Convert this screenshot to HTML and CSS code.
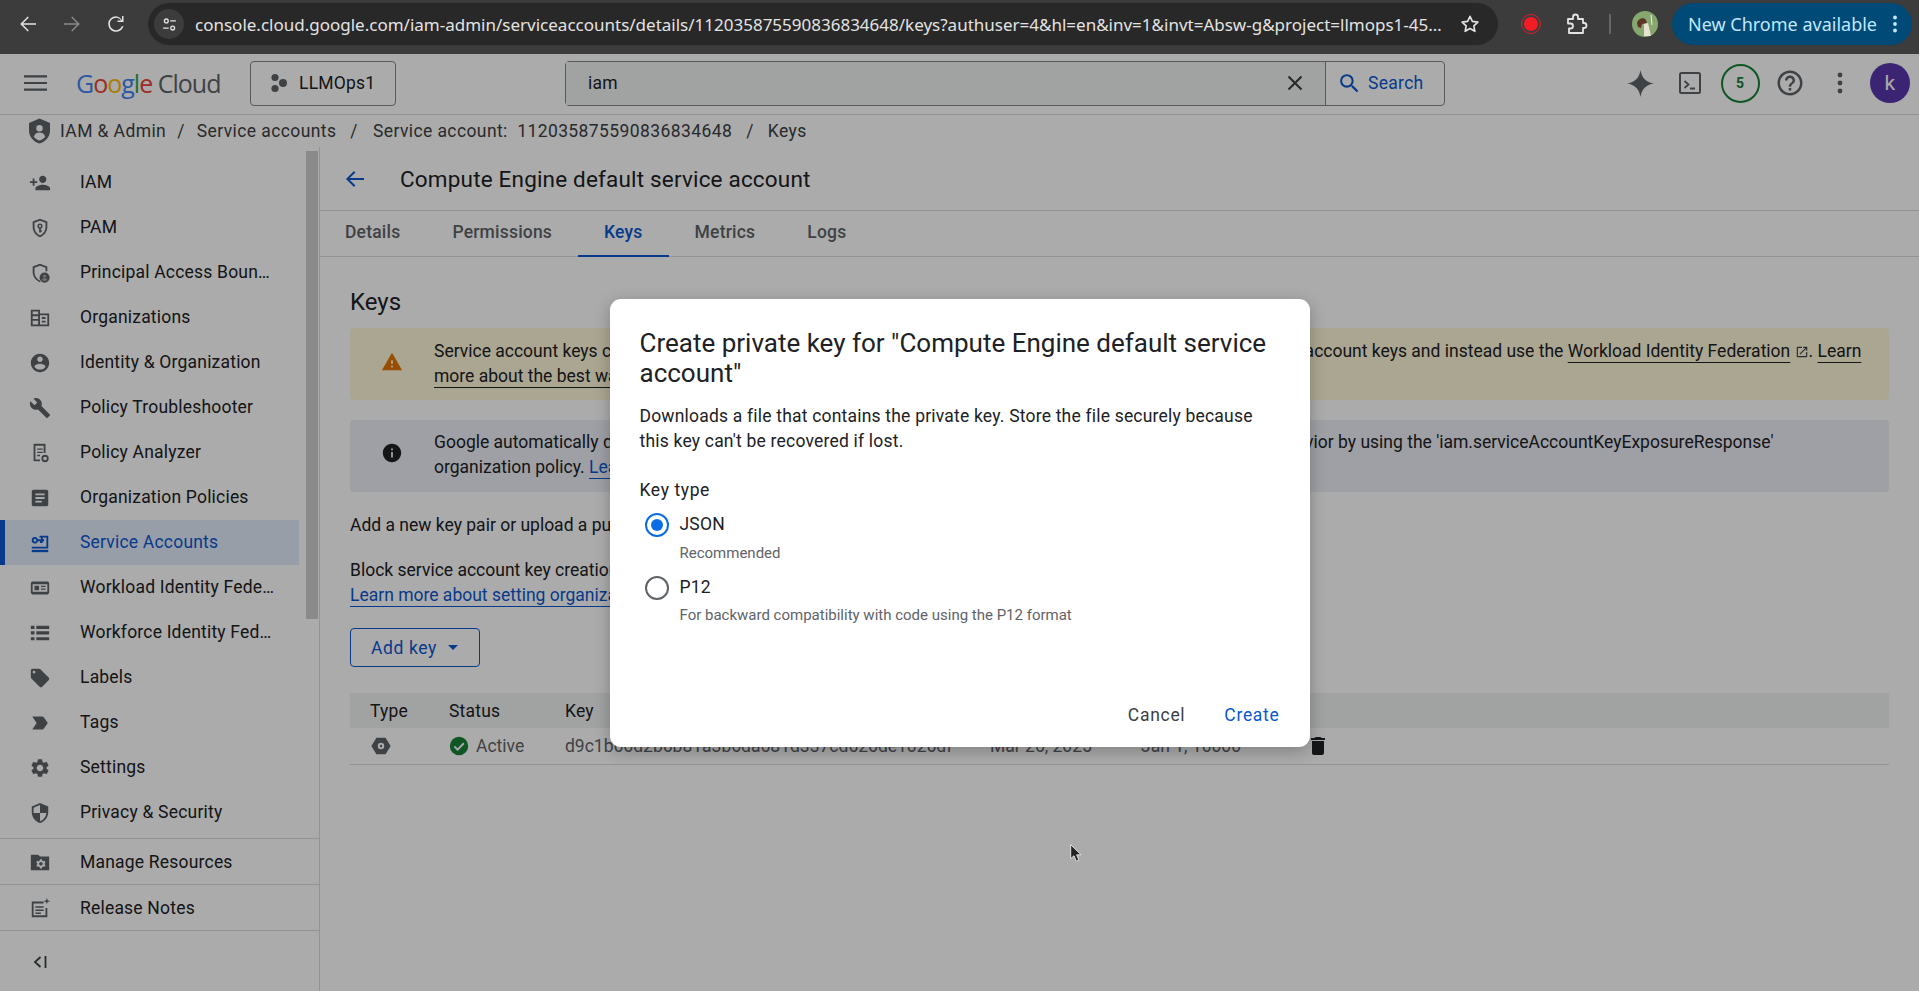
FILE: index.html
```html
<!DOCTYPE html>
<html>
<head>
  <title>Compute Engine default service account - Keys</title>
  <link rel="stylesheet" href="styles.css">
</head>
<body>
  <!-- browser toolbar -->
  <div class="browser-bar">
    <svg class="nav-icon first" viewBox="0 0 24 24"><path d="M20 11.200H7l5.800-5.800-1-1L4.200 12l7.600 7.600 1-1L7 12.800h13z"/></svg>
    <svg class="nav-icon off" viewBox="0 0 24 24"><path d="M4 11.200h13l-5.800-5.800 1-1 7.600 7.600-7.600 7.600-1-1 5.800-5.800H4z"/></svg>
    <svg class="nav-icon" viewBox="0 0 24 24"><path d="M18 4v4.300h-.1A7.900 7.900 0 0 0 12 4.200a7.800 7.800 0 1 0 7.500 10h-1.700A6.200 6.200 0 1 1 12 5.800c2.100 0 3.900 1 5 2.700h-3.500V10H19.500V4z"/></svg>
    <div class="url-pill">
      <span class="site-info">
        <svg viewBox="0 0 24 24" fill="none" stroke="#e3e3e3" stroke-width="1.7"><circle cx="8" cy="7.500" r="2.400"/><path d="M13 7.500h7M4 16.500h7"/><circle cx="16" cy="16.500" r="2.400"/></svg>
      </span>
      <span class="url-text">console.cloud.google.com/iam-admin/serviceaccounts/details/112035875590836834648/keys?authuser=4&amp;hl=en&amp;inv=1&amp;invt=Absw-g&amp;project=llmops1-45…</span>
      <svg class="star" viewBox="0 0 24 24" fill="none" stroke="#e3e3e3" stroke-width="1.8" stroke-linejoin="round"><path d="M12 3.600l2.600 5.500 6 .8-4.400 4.100 1.100 6L12 17l-5.300 3 1.100-6-4.400-4.100 6-.8z"/></svg>
    </div>
    <span class="record"><span class="record-dot"></span></span>
    <svg class="puzzle" viewBox="0 0 24 24" fill="none" stroke="#e3e3e3" stroke-width="1.8" stroke-linejoin="round"><path d="M4 7h5V5a2.500 2.500 0 0 1 5 0v2h5v4h1a2.500 2.500 0 0 1 0 5h-1v5H5v-4.500h1.500a2.500 2.500 0 0 0 0-5H4z"/></svg>
    <span class="bar-sep"></span>
    <svg class="profile" viewBox="0 0 26 26"><circle cx="13" cy="13" r="13" fill="#86a86f"/><path d="M5 12c1-5 7-6 9-3l1 3-5 1-1 4-3-1z" fill="#5b3427"/><path d="M12 13l4-1 3 13h-7z" fill="#e8e2d4"/><path d="M19 4l1 10" stroke="#eee" stroke-width="1"/></svg>
    <div class="update-pill">
      <span>New Chrome available</span>
      <svg viewBox="0 0 6 20" width="6" height="20" fill="#c2e7ff"><circle cx="3" cy="3.500" r="1.900"/><circle cx="3" cy="10" r="1.900"/><circle cx="3" cy="16.500" r="1.900"/></svg>
    </div>
  </div>

  <div class="page">
    <header class="cloud-bar">
      <svg class="hamburger" viewBox="0 0 24 16"><path d="M0 0h24v2.200H0zM0 6.900h24v2.200H0zM0 13.800h24V16H0z" fill="#5f6368"/></svg>
      <div class="logo"><span class="lg-b">G</span><span class="lg-r">o</span><span class="lg-y">o</span><span class="lg-b">g</span><span class="lg-g">l</span><span class="lg-r">e</span> <span class="lg-c">Cloud</span></div>
      <button class="project-btn">
        <svg viewBox="0 0 18 20" width="18" height="20" fill="#5f6368"><circle cx="5" cy="4.500" r="3.600"/><circle cx="5" cy="15.500" r="3.600"/><circle cx="13" cy="10" r="4"/></svg>
        LLMOps1
      </button>
      <div class="search-box">
        <div class="search-input">
          <span class="search-term">iam</span>
          <svg viewBox="0 0 24 24" width="24" height="24"><path d="M5.500 5.500l13 13M18.500 5.500l-13 13" stroke="#3c4043" stroke-width="2.200"/></svg>
        </div>
        <div class="search-go">
          <svg viewBox="0 0 24 24" width="25" height="25" fill="#0b57d0"><path d="M15.500 14h-.79l-.28-.27A6.470 6.470 0 0 0 16 9.500 6.500 6.500 0 1 0 9.500 16c1.610 0 3.090-.59 4.230-1.570l.27.28v.79l5 4.990L20.490 19l-4.990-5zm-6 0C7.010 14 5 11.990 5 9.500S7.010 5 9.500 5 14 7.010 14 9.500 11.990 14 9.500 14z"/></svg>
          <span>Search</span>
        </div>
      </div>
      <div class="bar-actions">
        <span class="bar-action"><svg viewBox="0 0 24 24" width="27" height="27" fill="#5f6368"><path d="M12 0c1 7 5 11 12 12-7 1-11 5-12 12-1-7-5-11-12-12 7-1 11-5 12-12z"/></svg></span>
        <span class="bar-action"><svg viewBox="0 0 24 24" width="24" height="26" fill="none" stroke="#5f6368" stroke-width="2"><rect x="2" y="2" width="20" height="20" rx="1.500"/><path d="M6.500 10l4 3.500-4 3.500" stroke-width="1.800"/><path d="M12 17.500h5" stroke-width="2"/></svg></span>
        <span class="bar-action"><span class="count-ring">5</span></span>
        <span class="bar-action"><svg viewBox="0 0 24 24" width="30" height="30" fill="#5f6368"><path d="M11 18h2v-2h-2v2zm1-16C6.480 2 2 6.480 2 12s4.480 10 10 10 10-4.480 10-10S17.520 2 12 2zm0 18c-4.410 0-8-3.590-8-8s3.590-8 8-8 8 3.590 8 8-3.590 8-8 8zm0-14c-2.210 0-4 1.790-4 4h2c0-1.100.9-2 2-2s2 .9 2 2c0 2-3 1.750-3 5h2c0-2.250 3-2.500 3-5 0-2.210-1.790-4-4-4z"/></svg></span>
        <span class="bar-action"><svg viewBox="0 0 6 24" width="6" height="24" fill="#5f6368"><circle cx="3" cy="4" r="2.400"/><circle cx="3" cy="12" r="2.400"/><circle cx="3" cy="20" r="2.400"/></svg></span>
        <span class="bar-action"><span class="user-chip">k</span></span>
      </div>
    </header>

    <nav class="crumbs">
      <svg class="crumb-icon" viewBox="0 0 22 26"><path d="M11 0L0 4.500v8C0 19 4.700 24.500 11 26c6.300-1.500 11-7 11-13.500v-8z" fill="#5f6368"/><circle cx="11" cy="10" r="3.400" fill="#fff"/><path d="M5 19c.6-3 3.400-4.500 6-4.500s5.400 1.500 6 4.500c-1.500 2-3.500 3.300-6 4-2.500-.7-4.500-2-6-4z" fill="#fff"/></svg>
      <span>IAM &amp; Admin</span><i>/</i>
      <span>Service accounts</span><i>/</i>
      <span>Service account: &nbsp;112035875590836834648</span><i>/</i>
      <span>Keys</span>
    </nav>

    <div class="workspace">
      <aside class="sidebar">
        <div class="side-scroll">
          <a class="side-item"><svg viewBox="0 0 24 24"><path d="M15 12c2.210 0 4-1.790 4-4s-1.790-4-4-4-4 1.790-4 4 1.790 4 4 4zm-9-2V7H4v3H1v2h3v3h2v-3h3v-2H6zm9 4c-2.670 0-8 1.340-8 4v2h16v-2c0-2.660-5.330-4-8-4z"/></svg>IAM</a>
          <a class="side-item"><svg viewBox="0 0 24 24"><path fill-rule="evenodd" d="M12 2L4 5v6c0 5 3.400 9.600 8 11 4.600-1.400 8-6 8-11V5zm0 2.100l6 2.300V11c0 4-2.600 7.800-6 9-3.400-1.200-6-5-6-9V6.400z"/><path fill-rule="evenodd" d="M12 7a3 3 0 0 0-1 5.800V17h2v-1h1v-1.500h-1v-1.700A3 3 0 0 0 12 7zm0 1.800a1.200 1.200 0 1 1 0 2.400 1.200 1.200 0 0 1 0-2.400z"/></svg>PAM</a>
          <a class="side-item"><svg viewBox="0 0 24 24"><path d="M12 2L4 5v6c0 5 3.400 9.600 8 11l.6-.2-1-1.800C8.400 18.600 6 15 6 11V6.400l6-2.300 6 2.300V10h2V5z"/><circle cx="17" cy="17" r="5.500"/><circle cx="17" cy="15.500" r="1.600" fill="#ababab"/><path d="M14 19.500c.5-1.200 1.700-1.700 3-1.700s2.500.5 3 1.700c-1.600 1.300-4.400 1.300-6 0z" fill="#ababab"/></svg>Principal Access Boun…</a>
          <a class="side-item"><svg viewBox="0 0 24 24"><path fill-rule="evenodd" d="M2 3h10v4h10v14H2zm2 2v3h6V5zm0 5v3h6v-3zm0 5v4h6v-4zm8-6v10h8V9zm2 2h4v2h-4zm0 4h4v2h-4z"/></svg>Organizations</a>
          <a class="side-item"><svg viewBox="0 0 24 24"><path d="M12 2C6.480 2 2 6.480 2 12s4.480 10 10 10 10-4.480 10-10S17.520 2 12 2zm0 3c1.660 0 3 1.340 3 3s-1.340 3-3 3-3-1.340-3-3 1.340-3 3-3zm0 14.200c-2.500 0-4.710-1.280-6-3.220.030-1.990 4-3.080 6-3.080 1.990 0 5.970 1.090 6 3.080-1.290 1.940-3.500 3.220-6 3.220z"/></svg>Identity &amp; Organization</a>
          <a class="side-item"><svg viewBox="0 0 24 24"><path d="M22.700 19l-9.100-9.100c.9-2.300.4-5-1.500-6.900-2-2-5-2.400-7.400-1.300L9 6 6 9 1.600 4.700C.4 7.100.9 10.100 2.900 12.100c1.900 1.900 4.600 2.400 6.900 1.500l9.100 9.100c.4.4 1 .4 1.400 0l2.300-2.300c.5-.4.5-1.100.1-1.400z"/></svg>Policy Troubleshooter</a>
          <a class="side-item"><svg viewBox="0 0 24 24"><path fill-rule="evenodd" d="M5 2h13v10h-2V4H7v15h5v2H5z"/><path d="M9 7h6v1.500H9zM9 10.500h6V12H9zM9 14h3v1.500H9z"/><path fill-rule="evenodd" d="M17.500 14a4 4 0 1 0 0 8 4 4 0 0 0 0-8zm0 2a2 2 0 1 1 0 4 2 2 0 0 1 0-4z"/></svg>Policy Analyzer</a>
          <a class="side-item"><svg viewBox="0 0 24 24"><path d="M19 3H5c-1.100 0-2 .9-2 2v14c0 1.100.9 2 2 2h14c1.100 0 2-.9 2-2V5c0-1.100-.9-2-2-2zM7 7h10v2H7zm0 4h10v2H7zm0 4h7v2H7z" fill-rule="evenodd"/></svg>Organization Policies</a>
          <a class="side-item active"><svg viewBox="0 0 24 24"><path fill-rule="evenodd" d="M6.500 5.500a3.500 3.500 0 0 1 3.300 2.300H13V6h-1.500V4H21v14H3v-2h16V6h-4v1.800h1.500V10H15v2h-3v-2H9.800a3.500 3.500 0 1 1-3.300-4.500zm0 2a1.500 1.500 0 1 0 0 3 1.500 1.500 0 0 0 0-3z"/><path d="M3 19.500h18V22H3z"/></svg>Service Accounts</a>
          <a class="side-item"><svg viewBox="0 0 24 24"><path fill-rule="evenodd" d="M4 5h16a2 2 0 0 1 2 2v10a2 2 0 0 1-2 2H4a2 2 0 0 1-2-2V7a2 2 0 0 1 2-2zm0 3v8h16V8zm2 1.500h5v5H6zm7 0h5V11h-5zm0 3h5v1.500h-5z"/></svg>Workload Identity Fede…</a>
          <a class="side-item"><svg viewBox="0 0 24 24"><path d="M2 4h4v3.500H2zM8 4h14v3.500H8zM2 10.200h4v3.500H2zM8 10.200h14v3.500H8zM2 16.500h4V20H2zM8 16.500h14V20H8z"/></svg>Workforce Identity Fed…</a>
          <a class="side-item"><svg viewBox="0 0 24 24"><path d="M21.410 11.580l-9-9C12.050 2.220 11.550 2 11 2H4c-1.100 0-2 .9-2 2v7c0 .55.22 1.050.59 1.420l9 9c.36.36.86.58 1.410.58.55 0 1.050-.22 1.410-.59l7-7c.37-.36.59-.86.59-1.410 0-.55-.23-1.060-.59-1.420zM5.500 7C4.670 7 4 6.330 4 5.500S4.670 4 5.500 4 7 4.670 7 5.500 6.330 7 5.500 7z"/></svg>Labels</a>
          <a class="side-item"><svg viewBox="0 0 24 24"><path d="M3.500 18.990l11 .01c.67 0 1.270-.33 1.630-.84L20.500 12l-4.370-6.160c-.36-.51-.96-.84-1.630-.84l-11 .01L8.340 12 3.500 18.990z"/></svg>Tags</a>
          <a class="side-item"><svg viewBox="0 0 24 24"><path d="M19.140 12.940c.04-.3.06-.61.06-.94 0-.32-.02-.64-.07-.94l2.030-1.580c.18-.14.23-.41.12-.61l-1.920-3.320c-.12-.22-.37-.29-.59-.22l-2.390.96c-.5-.38-1.030-.7-1.620-.94l-.36-2.540c-.04-.24-.24-.41-.48-.41h-3.840c-.24 0-.43.17-.47.41l-.36 2.540c-.59.24-1.130.57-1.620.94l-2.390-.96c-.22-.08-.47 0-.59.22L2.740 8.870c-.12.21-.08.47.12.61l2.030 1.580c-.05.3-.09.63-.09.94s.02.64.07.94l-2.030 1.580c-.18.14-.23.41-.12.61l1.920 3.320c.12.22.37.29.59.22l2.390-.96c.5.38 1.030.7 1.620.94l.36 2.540c.05.24.24.41.48.41h3.840c.24 0 .44-.17.47-.41l.36-2.540c.59-.24 1.130-.56 1.620-.94l2.390.96c.22.08.47 0 .59-.22l1.920-3.320c.12-.22.07-.47-.12-.61l-2.010-1.580zM12 15.600c-1.980 0-3.600-1.620-3.600-3.600s1.620-3.600 3.600-3.600 3.600 1.620 3.600 3.600-1.620 3.600-3.600 3.600z"/></svg>Settings</a>
          <a class="side-item"><svg viewBox="0 0 24 24"><path d="M12 1L3 5v6c0 5.550 3.840 10.740 9 12 5.160-1.260 9-6.450 9-12V5l-9-4zm0 10.990h7c-.53 4.120-3.280 7.790-7 8.940V12H5V6.300l7-3.110v8.800z"/></svg>Privacy &amp; Security</a>
        </div>
        <a class="side-item boxed"><svg viewBox="0 0 24 24"><path fill-rule="evenodd" d="M2 4h8l2 2h10v15H2zm10 5l-.4 1.500-1.200.7-1.400-.5-1 1.800 1.100 1c0 .4 0 .7 0 1l-1.100 1 1 1.800 1.400-.5 1.200.7.400 1.500h2l.4-1.500 1.200-.7 1.400.5 1-1.800-1.100-1c.1-.3.1-.6 0-1l1.100-1-1-1.800-1.400.5-1.200-.7L14 9zm1 3a2 2 0 1 1 0 4 2 2 0 0 1 0-4z"/></svg>Manage Resources</a>
        <a class="side-item boxed"><svg viewBox="0 0 24 24"><path fill-rule="evenodd" d="M3 5h13v2H5v13h13v-8h2v10H3z"/><path d="M7 10h9v1.800H7zM7 13.500h9v1.800H7zM7 17h6v1.500H7zM19.500 1l.9 2.600L23 4.500l-2.600.9-.9 2.600-.9-2.600-2.600-.9 2.600-.9z"/></svg>Release Notes</a>
        <div class="collapse-row">
          <svg viewBox="0 0 14 16" width="14" height="16" fill="none" stroke="#3c4043" stroke-width="1.800"><path d="M7.500 3L2 8l5.500 5M12.500 2v12"/></svg>
        </div>
        <div class="side-thumb"></div>
      </aside>

      <main class="content">
        <div class="title-row">
          <svg viewBox="0 0 24 24" width="24" height="24" fill="#0b57d0"><path d="M21 11H6.800l5.600-5.600L11 4l-8 8 8 8 1.400-1.400L6.800 13H21z"/></svg>
          <h1>Compute Engine default service account</h1>
        </div>
        <div class="tabs">
          <a class="tab">Details</a>
          <a class="tab">Permissions</a>
          <a class="tab current">Keys</a>
          <a class="tab">Metrics</a>
          <a class="tab">Logs</a>
        </div>
        <section class="keys-pane">
          <h2>Keys</h2>
          <div class="notice warn">
            <svg viewBox="0 0 24 24" width="22" height="22" fill="#e37400"><path d="M1 21h22L12 2 1 21zm12-3h-2v-2h2v2zm0-4h-2v-4h2v4z"/></svg>
            <p>Service account keys could pose a security risk if compromised. We recommend you avoid downloading service account keys and instead use the <a class="ink">Workload Identity Federation</a> <svg class="ext" viewBox="0 0 24 24" width="14" height="14" fill="#3c4043"><path d="M19 19H5V5h7V3H5a2 2 0 0 0-2 2v14a2 2 0 0 0 2 2h14a2 2 0 0 0 2-2v-7h-2v7zM14 3v2h3.590l-9.830 9.830 1.410 1.410L19 6.410V10h2V3h-7z"/></svg>. <a class="ink">Learn more about the best way to authenticate service accounts on Google Cloud here</a>.</p>
          </div>
          <div class="notice info">
            <svg viewBox="0 0 24 24" width="22" height="22" fill="#202124"><path d="M12 2C6.480 2 2 6.480 2 12s4.480 10 10 10 10-4.480 10-10S17.520 2 12 2zm1 15h-2v-6h2v6zm0-8h-2V7h2v2z"/></svg>
            <p>Google automatically disables service account keys detected in public repositories. You can customize this behavior by using the 'iam.serviceAccountKeyExposureResponse' organization policy. <a class="blue">Learn more</a></p>
          </div>
          <p class="para">Add a new key pair or upload a public key certificate from an existing key pair.</p>
          <p class="para">Block service account key creation using organization policies.<br><a class="blue">Learn more about setting organization policies for service accounts</a></p>
          <button class="add-key">Add key <svg viewBox="0 0 10 5" width="10" height="5" fill="#0b57d0"><path d="M0 0h10L5 5z"/></svg></button>
          <table class="key-table">
            <tr>
              <th class="c-type">Type</th>
              <th class="c-status">Status</th>
              <th class="c-key">Key</th>
              <th class="c-made">Key creation date</th>
              <th class="c-exp">Key expiry date</th>
              <th></th>
            </tr>
            <tr>
              <td><svg viewBox="0 0 24 24" width="22" height="22" fill="#5f6368"><path fill-rule="evenodd" d="M7 3h10l5.500 9L17 21H7L1.500 12zm5 5.500a3.500 3.500 0 1 0 0 7 3.500 3.500 0 0 0 0-7zm0 2.200a1.300 1.300 0 1 1 0 2.600 1.300 1.300 0 0 1 0-2.600z"/></svg></td>
              <td><span class="status-cell"><svg viewBox="0 0 24 24" width="20" height="20"><circle cx="12" cy="12" r="11" fill="#188038"/><path d="M6.500 12.500l3.800 3.800 7.500-7.600" fill="none" stroke="#fff" stroke-width="2.200"/></svg>Active</span></td>
              <td>d9c1b66d2b6b81a3b6da681d337cd626de1026df</td>
              <td>Mar 26, 2025</td>
              <td>Jan 1, 10000</td>
              <td><svg viewBox="0 0 24 24" width="24" height="24" fill="#202124"><path d="M6 19c0 1.100.9 2 2 2h8c1.100 0 2-.9 2-2V7H6v12zM19 4h-3.500l-1-1h-5l-1 1H5v2h14V4z"/></svg></td>
            </tr>
          </table>
        </section>
      </main>
    </div>

    <!-- modal -->
    <div class="scrim">
      <div class="dialog">
        <h3>Create private key for "Compute Engine default service account"</h3>
        <p class="dialog-copy">Downloads a file that contains the private key. Store the file securely because this key can't be recovered if lost.</p>
        <div class="field-label">Key type</div>
        <div class="radio-row">
          <span class="radio on"></span>
          <div>
            <div class="radio-name">JSON</div>
            <div class="radio-hint">Recommended</div>
          </div>
        </div>
        <div class="radio-row">
          <span class="radio"></span>
          <div>
            <div class="radio-name">P12</div>
            <div class="radio-hint">For backward compatibility with code using the P12 format</div>
          </div>
        </div>
        <div class="dialog-actions">
          <a class="act-cancel">Cancel</a>
          <a class="act-create">Create</a>
        </div>
      </div>
      <svg class="cursor" viewBox="0 0 12 18" width="12" height="18"><path d="M.7.7v14l3.300-3 2.300 5.500 2.600-1.100-2.300-5.300h4.500z" fill="#222" stroke="#eee" stroke-width=".9"/></svg>
    </div>
  </div>
</body>
</html>
```

FILE: styles.css
```css
* {
  box-sizing: border-box;
}

html, body {
  height: 100%;
}

body {
  margin: 0;
  height: 991px;
  overflow: hidden;
  font-family: Roboto, "Liberation Sans", sans-serif;
  font-size: 17.5px;
  letter-spacing: 0.2px;
  color: #202124;
  background: #fff;
}

/* browser toolbar */
.browser-bar {
  height: 54px;
  display: flex;
  align-items: center;
  background: #3c3c3c;
  letter-spacing: 0;
}

.nav-icon {
  width: 24px;
  height: 24px;
  margin-left: 20px;
  margin-bottom: 6px;
  fill: #e3e3e3;
}

.nav-icon.first {
  margin-left: 16px;
}

.nav-icon.off {
  fill: #8a8a8a;
}

.url-pill {
  width: 1350px;
  height: 42px;
  margin: 0 0 6px 20px;
  display: flex;
  align-items: center;
  background: #282828;
  border-radius: 21px;
  padding-left: 6px;
}

.site-info {
  width: 30px;
  height: 30px;
  border-radius: 50%;
  background: #3c3c3c;
  display: flex;
  align-items: center;
  justify-content: center;
}

.site-info svg {
  width: 19px;
  height: 19px;
}

.url-text {
  width: 1250px;
  margin-left: 11px;
  font-family: "Noto Sans", sans-serif;
  font-size: 17px;
  color: #e3e3e3;
  white-space: nowrap;
  overflow: hidden;
}

.star {
  width: 22px;
  height: 22px;
  margin-left: 14px;
}

.record {
  width: 20px;
  height: 20px;
  margin: 0 0 6px 23px;
  border-radius: 50%;
  border: 1.5px solid #d8222a;
  display: flex;
  align-items: center;
  justify-content: center;
}

.record-dot {
  width: 14px;
  height: 14px;
  border-radius: 50%;
  background: #f41c24;
}

.puzzle {
  width: 24px;
  height: 24px;
  margin: 0 0 6px 23px;
}

.bar-sep {
  width: 2px;
  height: 20px;
  margin: 0 0 6px 21px;
  background: #666;
}

.profile {
  width: 26px;
  height: 26px;
  margin: 0 0 6px 21px;
}

.update-pill {
  width: 240px;
  height: 42px;
  margin: 0 0 6px 14px;
  padding: 0 14px 0 16px;
  display: flex;
  align-items: center;
  justify-content: space-between;
  background: #004a77;
  border-radius: 21px;
  font-family: "Noto Sans", sans-serif;
  font-size: 18px;
  color: #c2e7ff;
  white-space: nowrap;
}

/* page below the browser chrome */
.page {
  position: relative;
  height: 937px;
  display: flex;
  flex-direction: column;
}

.cloud-bar {
  height: 61px;
  flex: none;
  display: flex;
  align-items: center;
  border-bottom: 1px solid #dadce0;
  padding-bottom: 2px;
}

.hamburger {
  width: 23px;
  height: 16px;
  margin-left: 24px;
}

.logo {
  width: 145px;
  margin-left: 29px;
  font-family: "Open Sans", sans-serif;
  font-size: 25px;
  letter-spacing: -1px;
  white-space: nowrap;
}

.lg-b { color: #4285f4; }
.lg-r { color: #ea4335; }
.lg-y { color: #fbbc04; }
.lg-g { color: #34a853; }
.lg-c { color: #5f6368; }

.project-btn {
  width: 146px;
  height: 45px;
  margin-left: 29px;
  padding: 0 0 0 19px;
  display: flex;
  align-items: center;
  gap: 11px;
  background: transparent;
  border: 1px solid #80868b;
  border-radius: 4px;
  font-family: Roboto, sans-serif;
  font-size: 17.5px;
  letter-spacing: 0.2px;
  color: #202124;
}

.search-box {
  width: 880px;
  height: 45px;
  margin-left: 169px;
  display: flex;
  border: 1px solid #80868b;
  border-radius: 4px;
}

.search-input {
  width: 760px;
  display: flex;
  align-items: center;
  justify-content: space-between;
  padding: 0 18px 0 22px;
  background: #f1f3f4;
  border-right: 1px solid #80868b;
}

.search-go {
  flex: 1;
  display: flex;
  align-items: center;
  gap: 6px;
  padding-left: 11px;
  font-weight: 450;
  letter-spacing: 0.3px;
  color: #0b57d0;
}

.bar-actions {
  display: flex;
  margin-left: auto;
  padding-right: 4px;
}

.bar-action {
  width: 50px;
  height: 45px;
  display: flex;
  align-items: center;
  justify-content: center;
}

.count-ring {
  width: 39px;
  height: 39px;
  display: flex;
  align-items: center;
  justify-content: center;
  border: 2px solid #188038;
  border-radius: 50%;
  font-size: 14px;
  font-weight: 700;
  color: #188038;
}

.user-chip {
  width: 40px;
  height: 40px;
  display: flex;
  align-items: center;
  justify-content: center;
  border-radius: 50%;
  background: #5937ad;
  color: #fff;
  font-size: 21px;
}

.crumbs {
  height: 32px;
  flex: none;
  display: flex;
  align-items: center;
  padding: 0 0 0 29px;
  letter-spacing: 0.4px;
  color: #3c4043;
}

.crumb-icon {
  width: 21px;
  height: 26px;
  margin-right: 10px;
}

.crumbs i {
  font-style: normal;
  margin: 0 14px;
}

.crumbs i:first-of-type {
  margin: 0 12px 0 11px;
}

.crumbs i:nth-of-type(2) {
  margin-right: 15px;
}

.workspace {
  flex: 1;
  display: flex;
  min-height: 0;
}

/* left navigation */
.sidebar {
  position: relative;
  width: 320px;
  flex: none;
  border-right: 1px solid #dadce0;
}

.side-scroll {
  height: 692px;
  padding: 12.5px 0 0;
  border-bottom: 1px solid #dadce0;
}

.side-item {
  height: 45px;
  width: 299px;
  display: flex;
  align-items: center;
  padding-left: 80px;
  position: relative;
  white-space: nowrap;
  color: #202124;
}

.side-item svg {
  position: absolute;
  left: 29px;
  top: 12px;
  width: 22px;
  height: 22px;
  fill: #5f6368;
}

.side-item.active {
  background: #e3ecfb;
  border-left: 5px solid #0b57d0;
  padding-left: 75px;
  color: #0b57d0;
}

.side-item.active svg {
  left: 24px;
  fill: #0b57d0;
}

.side-item.boxed {
  width: 319px;
  height: 46px;
  border-bottom: 1px solid #dadce0;
}

.collapse-row {
  height: 60px;
  padding: 23px 0 0 33px;
}

.side-thumb {
  position: absolute;
  left: 306px;
  top: 4px;
  width: 12px;
  height: 468px;
  background: #cecece;
}

/* main column */
.content {
  flex: 1;
  min-width: 0;
}

.title-row {
  height: 64px;
  display: flex;
  align-items: center;
  gap: 33px;
  padding: 1px 0 0 23px;
  border-bottom: 1px solid #dadce0;
}

h1 {
  margin: 0;
  font-size: 22.5px;
  letter-spacing: 0.18px;
  font-weight: 400;
}

.tabs {
  height: 46px;
  display: flex;
  border-bottom: 1px solid #dadce0;
}

.tab {
  padding: 0 26px 3px;
  display: flex;
  align-items: center;
  font-weight: 480;
  color: #5f6368;
  border-bottom: 2px solid transparent;
  margin-bottom: -1px;
}

.tab:first-child {
  padding-left: 25px;
}

.tab.current {
  color: #0b57d0;
  border-bottom-color: #0b57d0;
}

.keys-pane {
  padding: 0 30px;
  letter-spacing: 0;
}

h2 {
  margin: 29px 0 10px;
  font-size: 24px;
  line-height: 32px;
  font-weight: 400;
}

.notice {
  display: flex;
  gap: 31px;
  padding: 10px 24px 12px 31px;
  margin-bottom: 20px;
  border-radius: 4px;
  line-height: 25px;
}

.notice p {
  margin: 0;
}

.notice > svg {
  flex: none;
  margin-top: 12px;
}

.warn {
  padding: 11px 24px 11px 31px;
  background: #fef8d8;
}

.info {
  margin-bottom: 21px;
  background: #edeff6;
}

a.ink {
  color: #202124;
  text-decoration: underline;
  text-underline-offset: 5px;
  text-decoration-thickness: 1px;
}

a.blue {
  color: #0b57d0;
  text-decoration: underline;
  text-underline-offset: 5px;
  text-decoration-thickness: 1px;
}

.ext {
  vertical-align: -2px;
}

.para {
  margin: 18px 0 20px;
  line-height: 25px;
}

.add-key {
  width: 130px;
  height: 39px;
  padding: 0 0 0 20px;
  display: flex;
  align-items: center;
  gap: 11px;
  background: transparent;
  border: 1px solid #0b57d0;
  border-radius: 4px;
  font-family: Roboto, sans-serif;
  font-size: 17.5px;
  letter-spacing: 0.6px;
  font-weight: 450;
  color: #0b57d0;
}

.key-table {
  width: 100%;
  margin-top: 26px;
  border-collapse: collapse;
  table-layout: fixed;
}

.key-table th {
  height: 35px;
  padding: 0 0 0 20px;
  text-align: left;
  letter-spacing: 0.2px;
  font-weight: 450;
  white-space: nowrap;
  background: #f1f3f4;
}

.key-table td {
  height: 36px;
  padding: 0 0 0 20px;
  border-bottom: 1px solid #dadce0;
  color: #5f6368;
  white-space: nowrap;
}

.key-table td svg {
  display: block;
}

.status-cell {
  display: flex;
  align-items: center;
  gap: 7px;
}

.c-type { width: 79px; }
.c-status { width: 116px; }
.c-key { width: 425px; }
.c-made { width: 151px; }
.c-exp { width: 165px; }

/* modal */
.scrim {
  position: absolute;
  inset: 0;
  display: flex;
  align-items: center;
  justify-content: center;
  background: rgba(0, 0, 0, 0.33);
}

.dialog {
  width: 700px;
  height: 448px;
  padding: 29px 30px 0;
  display: flex;
  flex-direction: column;
  background: #fff;
  border-radius: 11px;
  box-shadow: 0 4px 16px rgba(0, 0, 0, 0.25);
}

h3 {
  margin: 0;
  font-size: 26px;
  line-height: 30px;
  letter-spacing: 0;
  font-weight: 400;
}

.dialog-copy {
  margin: 16px 0 0;
  line-height: 25px;
}

.field-label {
  margin-top: 24px;
  font-weight: 450;
  letter-spacing: 0.6px;
  line-height: 25px;
}

.radio-row {
  display: flex;
  gap: 11px;
  padding-left: 5px;
  margin-top: 9px;
  height: 52px;
}

.radio-row + .radio-row {
  margin-top: 11px;
}

.radio {
  position: relative;
  width: 24px;
  height: 24px;
  margin-top: 1px;
  flex: none;
  border: 2px solid #5f6368;
  border-radius: 50%;
}

.radio.on {
  border-color: #0b6ce6;
}

.radio.on::after {
  content: "";
  position: absolute;
  left: 4px;
  top: 4px;
  width: 12px;
  height: 12px;
  border-radius: 50%;
  background: #0b6ce6;
}

.radio-name {
  line-height: 24px;
}

.radio-hint {
  margin-top: 7px;
  font-size: 15px;
  letter-spacing: 0;
  line-height: 20px;
  color: #5f6368;
}

.radio-row + .radio-row .radio-hint {
  margin-top: 6px;
}

.dialog-actions {
  margin-top: auto;
  height: 42px;
  display: flex;
  justify-content: flex-end;
  gap: 39px;
  font-weight: 450;
  letter-spacing: 0.7px;
}

.act-cancel {
  color: #3c4043;
}

.act-create {
  color: #0b57d0;
}

.cursor {
  position: absolute;
  left: 1070px;
  top: 790px;
}
```
